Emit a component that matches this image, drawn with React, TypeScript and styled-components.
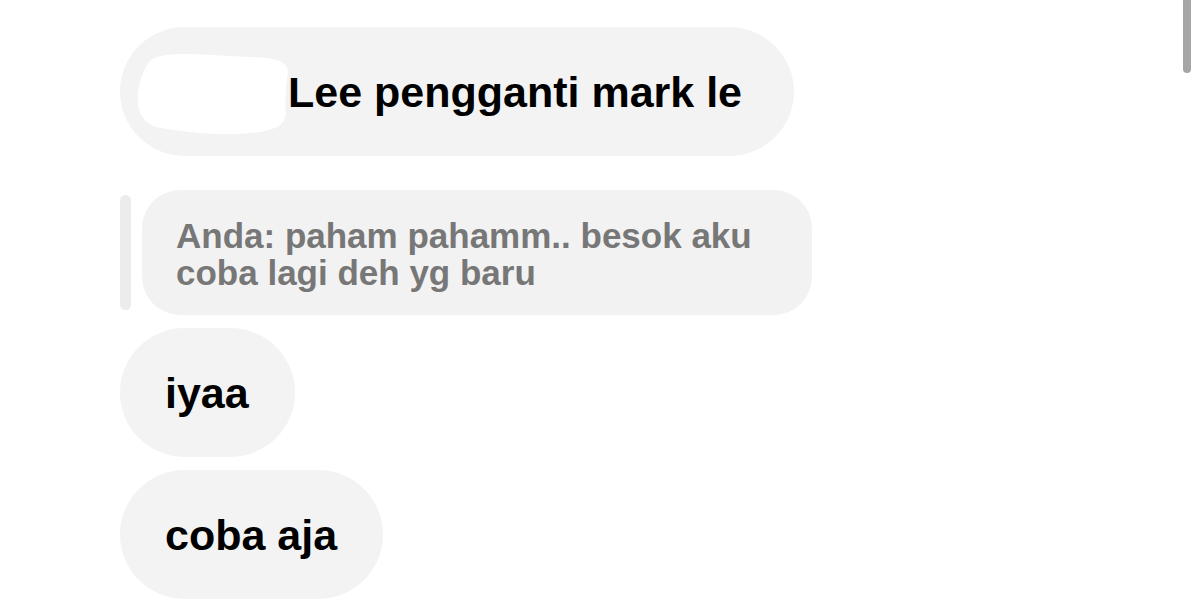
import React from "react";
import styled, { createGlobalStyle } from "styled-components";

const GlobalStyle = createGlobalStyle`
  html, body {
    margin: 0;
    padding: 0;
    background: #ffffff;
  }
  body {
    font-family: "Liberation Sans", Arial, sans-serif;
    overflow: hidden;
  }
`;

const Page = styled.div`
  position: relative;
  width: 1200px;
  height: 609px;
  overflow: hidden;
  background: #ffffff;
`;

const Thread = styled.div`
  display: flex;
  flex-direction: column;
  align-items: flex-start;
  padding: 27px 0 0 120px;
`;

const Bubble = styled.div<{ $gapTop?: number; $padRight?: number }>`
  position: relative;
  box-sizing: border-box;
  margin-top: ${(p) => p.$gapTop ?? 0}px;
  padding: 41px ${(p) => p.$padRight ?? 46}px 40px 45px;
  border-radius: 65px;
  background: #f3f3f3;
  color: #000000;
  font-size: 43px;
  font-weight: 700;
  line-height: 48px;
  white-space: nowrap;
`;

const HiddenName = styled.span`
  display: inline-block;
  width: 123px;
  height: 1px;
`;

const Redaction = styled.svg`
  position: absolute;
  left: 15px;
  top: 23px;
  width: 156px;
  height: 87px;
`;

const ReplyRow = styled.div`
  display: flex;
  align-items: stretch;
  gap: 11px;
  margin-top: 34px;
`;

const QuoteBar = styled.div`
  width: 11px;
  margin: 5px 0 5px;
  border-radius: 6px;
  background: #ececec;
`;

const QuoteBubble = styled.div`
  box-sizing: border-box;
  width: 670px;
  padding: 27px 40px 24px 34px;
  border-radius: 38px;
  background: #f2f2f2;
  color: #777777;
  font-size: 35px;
  font-weight: 700;
  line-height: 37px;
`;

const Scrollbar = styled.div`
  position: absolute;
  top: 0;
  left: 1183px;
  width: 8px;
  height: 73px;
  border-radius: 0 0 4px 4px;
  background: #a6a6a6;
`;

export default function App() {
  return (
    <Page>
      <GlobalStyle />
      <Thread>
        <Bubble $padRight={52}>
          <HiddenName />
          Lee pengganti mark le
          <Redaction viewBox="0 0 152 84" preserveAspectRatio="none" aria-hidden="true">
            <path
              d="M14,11 C25,1 60,4 96,6 C130,7 150,8 149,22 C147,35 146,48 147,62 C146,75 130,80 100,81 C70,82 40,78 20,74 C6,70 1,55 3,42 C4,30 8,20 14,11 Z"
              fill="#ffffff"
            />
          </Redaction>
        </Bubble>
        <ReplyRow>
          <QuoteBar />
          <QuoteBubble>Anda: paham pahamm.. besok aku coba lagi deh yg baru</QuoteBubble>
        </ReplyRow>
        <Bubble $gapTop={13}>iyaa</Bubble>
        <Bubble $gapTop={13}>coba aja</Bubble>
      </Thread>
      <Scrollbar />
    </Page>
  );
}
